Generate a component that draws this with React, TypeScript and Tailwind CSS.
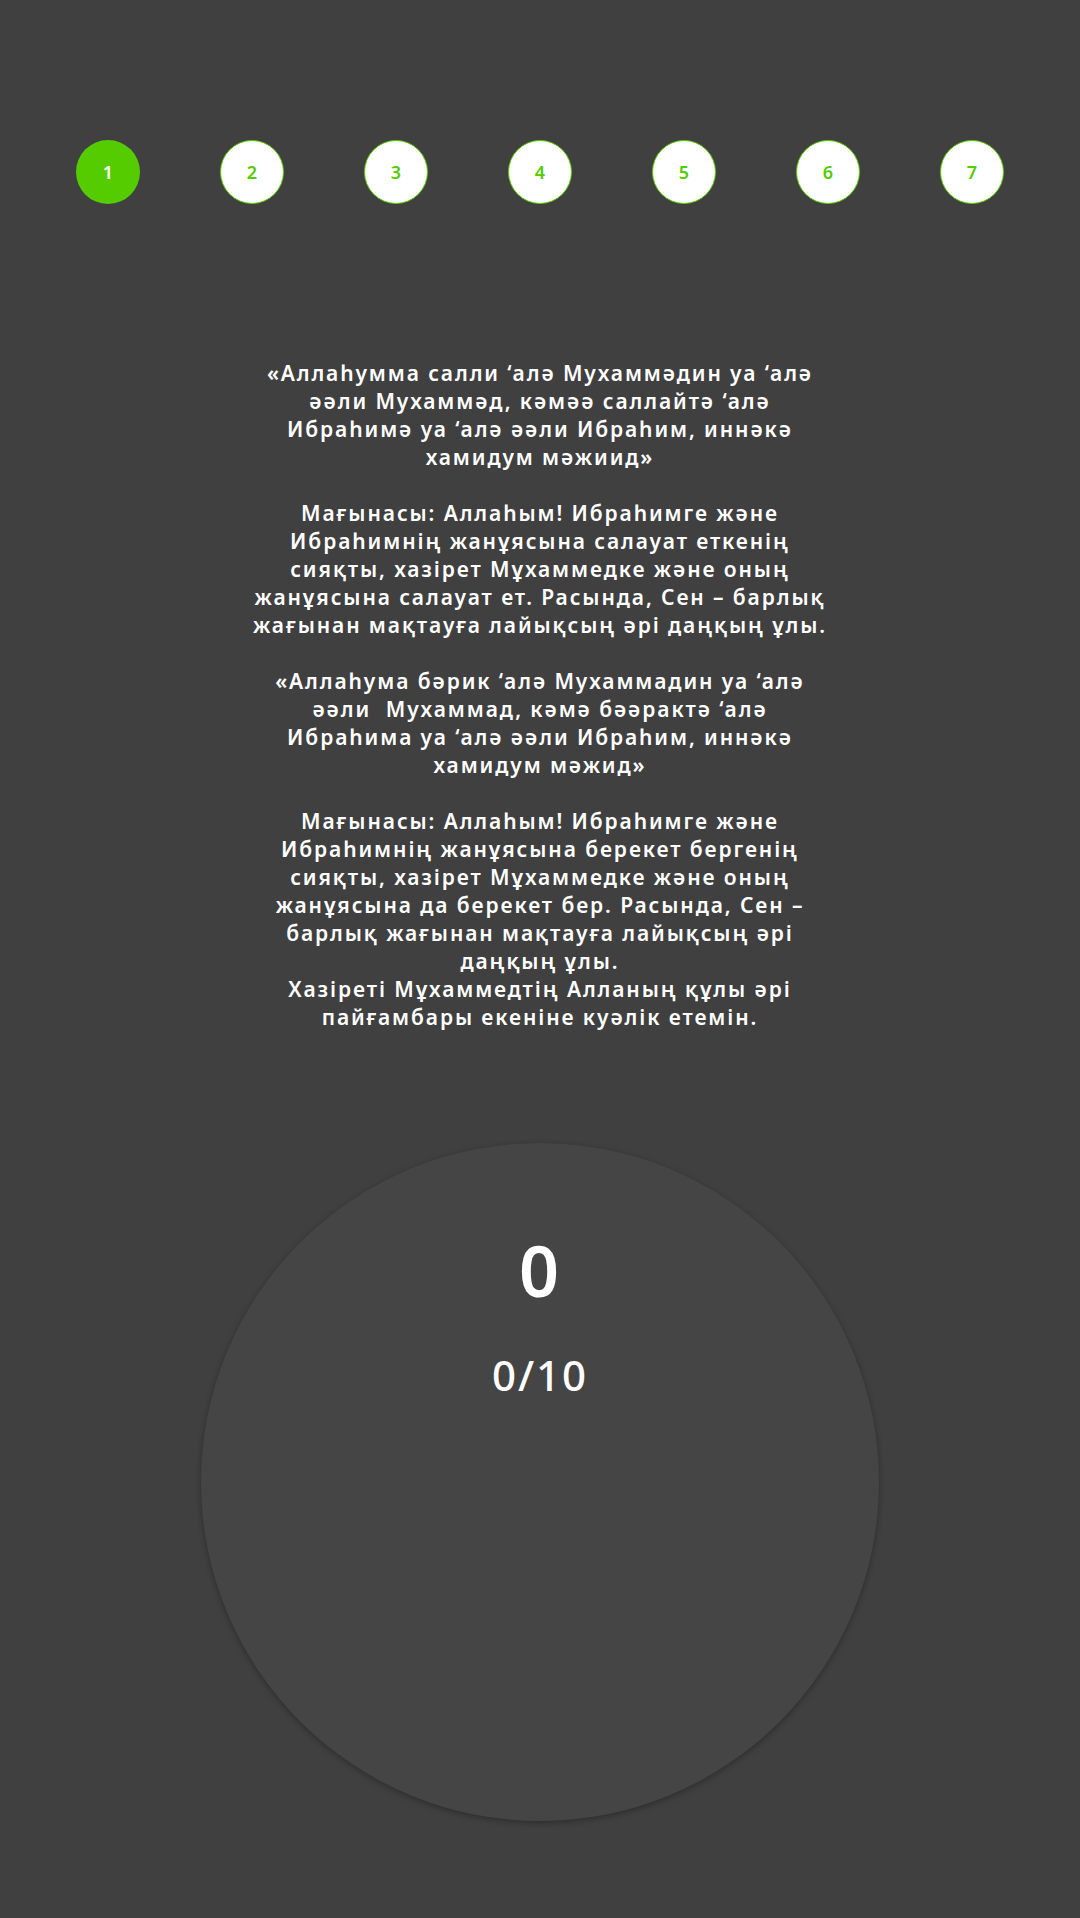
import React from "react";

const lines: string[][] = [
  [
    "«Аллаһумма салли ‘алә Мухаммәдин уа ‘алә",
    "әәли Мухаммәд, кәмәә саллайтә ‘алә",
    "Ибраһимә уа ‘алә әәли Ибраһим, иннәкә",
    "хамидум мәжиид»",
  ],
  [
    "Мағынасы: Аллаһым! Ибраһимге және",
    "Ибраһимнің жанұясына салауат еткенің",
    "сияқты, хазірет Мұхаммедке және оның",
    "жанұясына салауат ет. Расында, Сен – барлық",
    "жағынан мақтауға лайықсың әрі даңқың ұлы.",
  ],
  [
    "«Аллаһума бәрик ‘алә Мухаммадин уа ‘алә",
    "әәли  Мухаммад, кәмә бәәрактә ‘алә",
    "Ибраһима уа ‘алә әәли Ибраһим, иннәкә",
    "хамидум мәжид»",
  ],
  [
    "Мағынасы: Аллаһым! Ибраһимге және",
    "Ибраһимнің жанұясына берекет бергенің",
    "сияқты, хазірет Мұхаммедке және оның",
    "жанұясына да берекет бер. Расында, Сен –",
    "барлық жағынан мақтауға лайықсың әрі",
    "даңқың ұлы.",
    "Хазіреті Мұхаммедтің Алланың құлы әрі",
    "пайғамбары екеніне куәлік етемін.",
  ],
];

export default function App() {
  const steps = [1, 2, 3, 4, 5, 6, 7];
  return (
    <div
      className="min-h-[1918px] w-full bg-[#404040] flex flex-col items-center"
      style={{ fontFamily: '"Noto Sans", "Open Sans", sans-serif' }}
    >
      <div className="w-full px-[76px] pt-[140px] flex justify-between">
        {steps.map((n) =>
          n === 1 ? (
            <div
              key={n}
              className="w-[64px] h-[64px] rounded-full bg-[#55cc00] flex items-center justify-center text-white text-[18px] font-semibold"
            >
              {n}
            </div>
          ) : (
            <div
              key={n}
              className="w-[64px] h-[64px] rounded-full bg-white border-[1.5px] border-[#55cc00] flex items-center justify-center text-[#55cc00] text-[18px] font-semibold"
            >
              {n}
            </div>
          )
        )}
      </div>

      <div className="mt-[155px] flex flex-col items-center text-center text-white text-[21px] leading-[28px] font-semibold tracking-[1.9px] whitespace-pre">
        {lines.map((para, i) => (
          <div key={i} className={i > 0 && i < 4 ? "mt-[28px]" : ""}>
            {para.map((l, j) => (
              <div key={j}>{l}</div>
            ))}
          </div>
        ))}
      </div>

      <div className="mt-[112px] w-[678px] h-[678px] rounded-full bg-[#454545] shadow-[0_2px_6px_rgba(0,0,0,0.3)] flex flex-col items-center">
        <div className="mt-[83px] text-white text-[70px] leading-[88px] font-semibold tracking-[2px]">0</div>
        <div className="mt-[35px] text-white text-[42px] leading-[52px] font-medium tracking-[2px]">0/10</div>
      </div>
    </div>
  );
}
